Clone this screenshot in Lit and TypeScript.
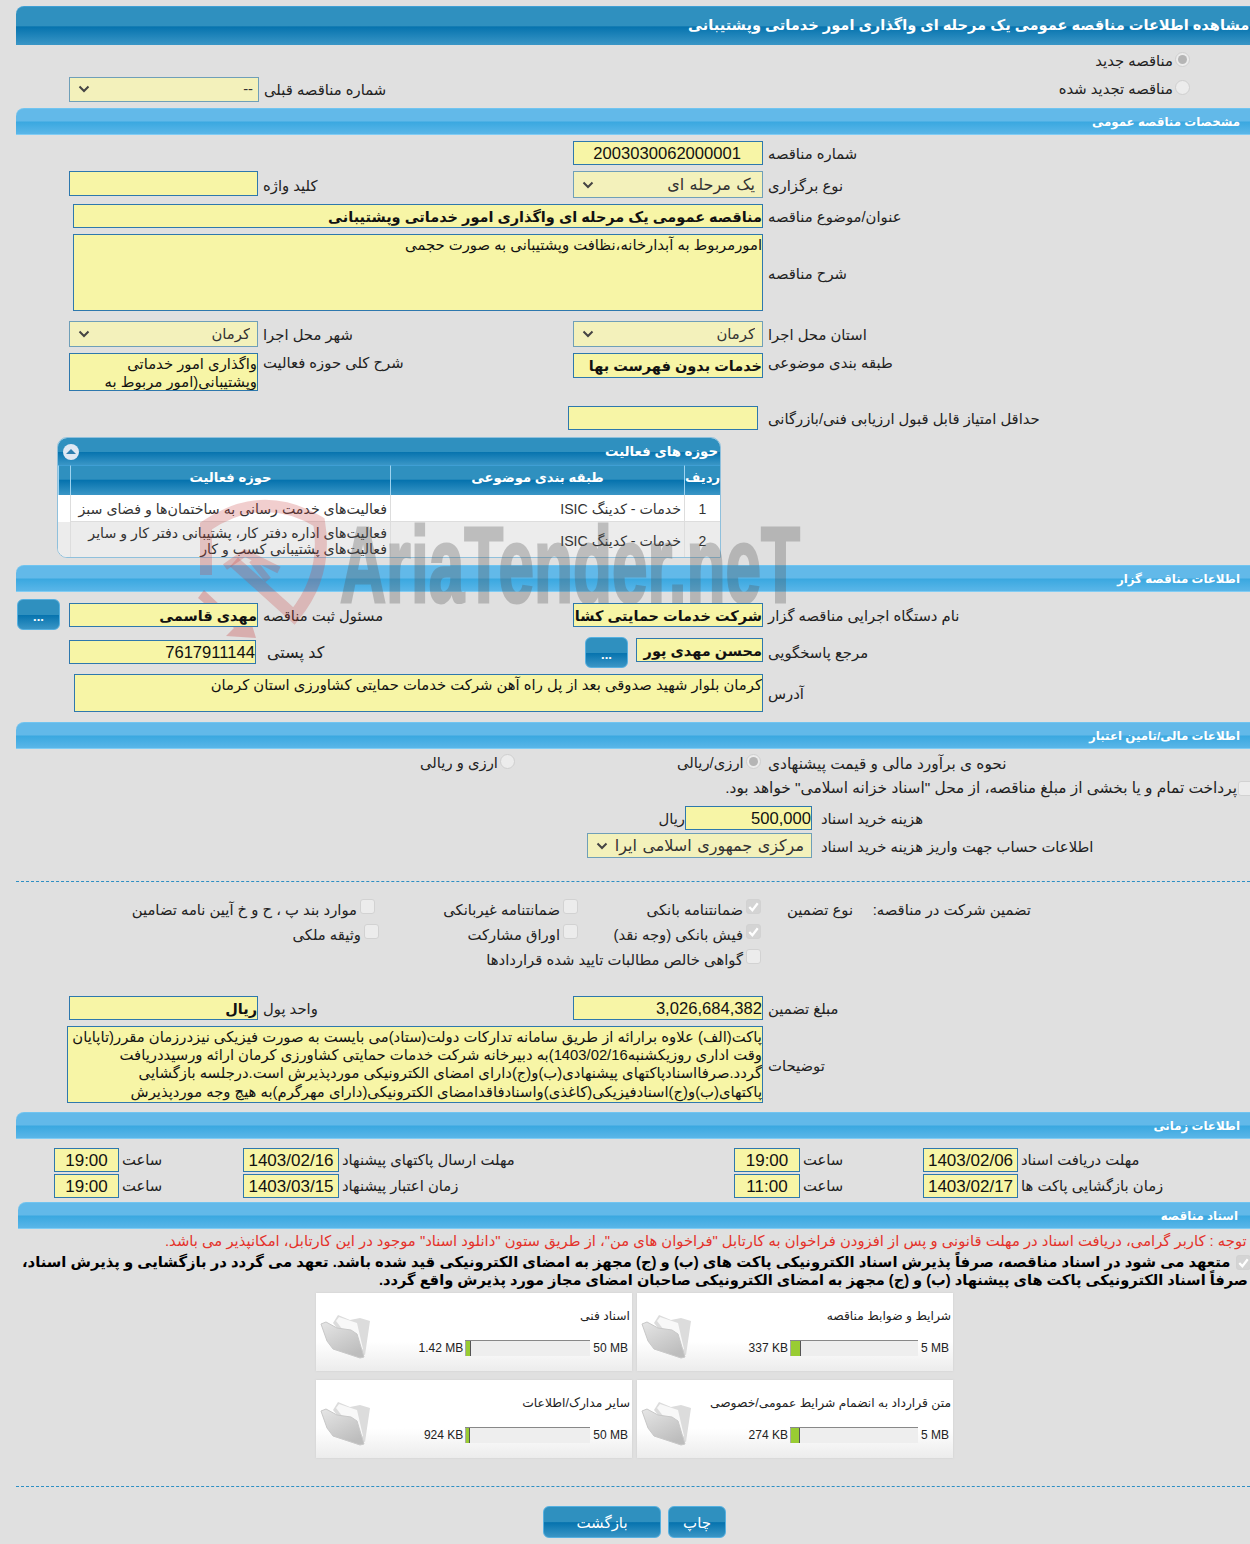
import { LitElement, html, css, svg } from "lit";
import { customElement } from "lit/decorators.js";

const chev = html`<svg class="chev" viewBox="0 0 12 8" width="12" height="8"><path d="M1.5 1.5 6 6l4.5-4.5" fill="none" stroke="#444" stroke-width="2"/></svg>`;
const check = html`<svg viewBox="0 0 16 16" width="15" height="15"><path d="M3.5 8.5 6.8 12 12.5 4.5" fill="none" stroke="#fff" stroke-width="2.4"/></svg>`;

const folder = svg`<svg class="folder" viewBox="0 0 54 48" width="54" height="48">
  <defs>
    <linearGradient id="fg" x1="0" y1="0" x2="0.6" y2="1"><stop offset="0" stop-color="#e6e6e6"/><stop offset="1" stop-color="#bdbdbd"/></linearGradient>
  </defs>
  <path d="M14 12 19 4 31 9 41 7 51 10 46 44 38 42Z" fill="#dcdcdc"/>
  <path d="M17 10 20 6 38 12 44 38 40 40Z" fill="#f8f8f8"/>
  <path d="M2 13 7 11 18 17 32 19 38 23 45 46 41 47 14 38 8 30Z" fill="url(#fg)" stroke="#c8c8c8" stroke-width="1"/>
</svg>`;

@customElement("file-card")
class FileCard extends LitElement {
  static properties = { name: {}, used: {}, max: {}, pct: { type: Number }, bar: { type: Number } };
  name = ""; used = ""; max = ""; pct = 0; bar = 128;
  static styles = css`
    :host { display: block; width: 316px; height: 78px; box-sizing: border-box; background: linear-gradient(#fff 0, #fff 62%, #ececec 100%); box-shadow: 0 0 2px #ccc; position: relative; font-family: "Liberation Sans", "DejaVu Sans", sans-serif; }
    .top { direction: rtl; padding: 13px 2px 0 0; height: 47px; box-sizing: border-box; font-size: 12.3px; line-height: 20px; color: #222; white-space: nowrap; }
    .bottom { display: flex; justify-content: flex-end; align-items: stretch; height: 16px; padding-right: 4px; font-size: 12px; line-height: 17px; color: #222; gap: 2px; white-space: nowrap; }
    .track { width: var(--w); background: #eee; border-top: 1px solid #888; display: flex; }
    .fill { background: #9c3; border-right: 1px solid #555; border-left: 1px solid #aaa; }
    .max { padding-left: 1px; }
    .folder { position: absolute; left: 3px; top: 18px; }
  `;
  render() {
    return html`${folder}
      <div class="top">${this.name}</div>
      <div class="bottom"><span>${this.used}</span>
        <span class="track" style="--w:${this.bar}px"><span class="fill" style="width:${this.pct}px"></span></span>
        <span class="max">${this.max}</span></div>`;
  }
}

@customElement("app-root")
class AppRoot extends LitElement {
  static styles = css`
    :host { display: block; width: 1250px; height: 1544px; overflow: hidden; background: #e0e0e0; position: relative; font-family: "Liberation Sans", "DejaVu Sans", sans-serif; font-size: 14.8px; color: #222; }
    * { box-sizing: border-box; }
    .page { padding-top: 6px; direction: ltr; }
    .titlebar { margin-left: 16px; height: 39px; border-radius: 8px 0 0 0; background: linear-gradient(#2f90bf 0, #2f90bf 50%, #0673ae 52%, #3a96c6 100%); border-top: 1px solid #3f9fd4; color: #fff; font-weight: bold; font-size: 14.6px; line-height: 37px; padding-left: 672px; white-space: nowrap; }
    .rtl { direction: rtl; display: inline-block; }
    .sec { margin-left: 16px; height: 27px; border-radius: 8px 0 0 0; background: linear-gradient(#62b9e9 0, #62b9e9 48%, #3aa8e0 52%, #5ab6e8 100%); border-top: 1px solid #70c4f0; border-bottom: 1px solid #80ccf4; color: #fff; font-weight: bold; font-size: 11.8px; line-height: 27px; text-align: right; padding-right: 10px; direction: rtl; }
    .sec.shift { margin-left: 18px; padding-right: 12px; }
    .r { display: grid; grid-template-columns: 69px 189px 315px 190px 1fr; position: relative; }
    .c2 { grid-column: 2; } .c3 { grid-column: 3; } .c4 { grid-column: 4; } .c5 { grid-column: 5; }
    .l { align-self: center; white-space: nowrap; padding: 2px 0 0 5px; direction: rtl; text-align: left; line-height: 16px; }
    .l.head { align-self: start; padding-top: 2px; }
    .l.wider { font-size: 15.4px; }
    .l.post { padding-left: 11px; font-size: 16px; }
    .f { position: relative; z-index: 2; background: #f7f5a6; border: 1px solid #2e78ad; direction: rtl; overflow: hidden; white-space: nowrap; font-size: 14.8px; line-height: 24px; color: #111; }
    .f.num { font-size: 16.6px; line-height: 24px; }
    .f.serial { padding-right: 21px; }
    .f.b { font-weight: bold; font-size: 14.5px; }
    .sel { position: relative; z-index: 2; background: #f3f1bb; border: 1px solid #6f9fb8; direction: rtl; overflow: hidden; white-space: nowrap; font-size: 14.8px; line-height: 23px; color: #333; padding-right: 7px; display: flex; align-items: center; justify-content: space-between; }
    .sel.big { font-size: 16px; word-spacing: 1px; }
    .sel > span { overflow: hidden; flex: 1 1 auto; min-width: 0; }
    .chev { flex: none; margin: 0 6px 0 8px; }
    .h24 { height: 24px; } .h25 { height: 25px; } .h26 { height: 26px; } .h27 { height: 27px; }
    .mt2 { margin-top: 2px; } .mt4 { margin-top: 4px; } .mt6 { margin-top: 6px; } .mt9 { margin-top: 9px; } .mt10 { margin-top: 10px; } .mt15 { margin-top: 15px; } .mt19 { margin-top: 19px; } .mt23 { margin-top: 23px; } .mt24 { margin-top: 24px; } .mt28 { margin-top: 28px; }
    .radios { height: 30px; display: flex; justify-content: flex-end; padding-right: 60px; align-items: center; gap: 2px; direction: ltr; }
    .radio { width: 15px; height: 15px; border-radius: 50%; border: 1px solid #cfcfcf; background: #ececec; flex: none; display: flex; align-items: center; justify-content: center; position: relative; top: -1px; }
    .radio.on::after { content: ""; width: 9px; height: 9px; border-radius: 50%; background: #b5b5b5; }
    .rad-row { height: 27px; margin-bottom: 6px; display: grid; grid-template-columns: 69px 190px 1fr auto; align-items: center; }
    .rad-item { display: flex; align-items: center; gap: 2px; padding-right: 60px; direction: ltr; }
    .rad-item > span:first-child, .radios > span:first-child { direction: rtl; }
    .prev { height: 25px; margin-top: 1px; padding-right: 5px; }
    .wide { height: 24px; margin-left: 73px; width: 690px; }
    .desc { height: 77px; margin-left: 73px; width: 690px; line-height: 20px; white-space: normal; }
    .row-w { display: grid; grid-template-columns: 763px 1fr; }
    .topic { height: 38px; line-height: 18px; padding-top: 1px; }
    .min { display: grid; grid-template-columns: 568px 190px 1fr; height: 24px; margin-top: 15px; }
    .min .l { padding-left: 10px; }

    .panel { margin: 7px 0 7px 57px; width: 664px; height: 121px; background: #fff; border: 1px solid #8fc0dc; border-radius: 10px 10px 0 10px; overflow: hidden; position: relative; }
    .phead { height: 27px; background: linear-gradient(#2f90bf 0, #2f90bf 50%, #0673ae 52%, #3a96c6 100%); color: #fff; font-weight: bold; font-size: 13.3px; line-height: 27px; direction: rtl; padding-right: 2px; display: flex; justify-content: space-between; align-items: center; }
    .toggle { width: 16px; height: 16px; border-radius: 50%; background: #dfe8f3; margin-left: 5px; display: flex; align-items: center; justify-content: center; }
    .toggle::after { content: ""; width: 0; height: 0; border-left: 5px solid transparent; border-right: 5px solid transparent; border-bottom: 5px solid #2f7fb0; }
    .tbl { display: grid; grid-template-columns: 36px 294px 320px 12px; direction: rtl; }
    .th { height: 30px; background: linear-gradient(#2f90bf 0, #2f90bf 45%, #0673ae 50%, #3a96c6 100%); color: #fff; font-weight: bold; font-size: 13.2px; line-height: 24px; text-align: center; border-left: 1px solid #9ed3f0; border-top: 1px solid #3f9fd4; white-space: nowrap; }
    .th:last-child { border-left: 0; }
    .td { display: flex; align-items: center; padding: 2px 3px 0; font-size: 14.2px; line-height: 16px; color: #333; border-left: 1px solid #ddd; border-bottom: 1px solid #ddd; white-space: nowrap; }
    .td.center { justify-content: center; font-size: 14px; }
    .rw1 { height: 27px; background: #fff; }
    .rw2 { height: 36px; background: #ececec; }

    .org { height: 31px; margin-top: 7px; align-items: center; grid-template-columns: 17px 43px 9px 189px 315px 190px 1fr; display: grid; }
    .btn { position: relative; z-index: 2; height: 31px; width: 43px; border-radius: 6px; background: linear-gradient(#2f90bf 0, #2f90bf 50%, #0673ae 52%, #3a96c6 100%); border: 1px solid #56b0e0; color: #fff; font-size: 13px; font-weight: bold; line-height: 33px; text-align: center; }
    .org .f { height: 24px; }
    .ref { display: grid; grid-template-columns: 69px 187px 329px 43px 8px 127px 1fr; height: 32px; margin-top: 6px; align-items: center; }
    .up { align-self: start; margin-top: 2px; }
    .addr { height: 38px; margin-left: 74px; width: 689px; line-height: 20px; }

    .fin1 { display: grid; grid-template-columns: 420px 257px 86px 1fr; height: 27px; align-items: center; direction: ltr; }
    .inl { display: flex; align-items: center; white-space: nowrap; gap: 2px; direction: ltr; }
    .inl > span:first-child { direction: rtl; }
    .cb { width: 15px; height: 15px; border-radius: 3px; background: #ececec; border: 1px solid #d2d2d2; flex: none; display: block; position: relative; top: -3px; }
    .cb.on { background: #d4d4d4; }
    .cb svg { display: block; margin: -1px; }
    .pay { height: 26px; position: relative; direction: rtl; padding-right: 13px; white-space: nowrap; line-height: 24px; font-size: 15.4px; }
    .pay .cb { position: absolute; right: -3px; top: 5px; }
    .fee { display: grid; grid-template-columns: 661px 24px 127px 1fr; height: 24px; margin-top: 4px; align-items: center; }
    .fee .l, .acct .l { padding-left: 9px; }
    .fee .rial { padding-left: 0; }
    .acct { display: grid; grid-template-columns: 587px 225px 1fr; height: 25px; margin-top: 3px; align-items: center; }
    .dash { border-top: 1px dashed #2e8fc4; margin-left: 16px; }

    .g { direction: rtl; display: grid; grid-template-columns: 178px 92px 183px 203px 1fr; padding-right: 219px; height: 25px; align-items: center; white-space: nowrap; }
    .g.first { margin-top: 15px; }
    .g .it { display: flex; align-items: center; gap: 3px; }
    .nudge { margin-right: -4px; }
    .notes { margin-left: 67px; width: 696px; height: 77px; line-height: 18.2px; padding-top: 1px; white-space: nowrap; }
    .note-row { display: grid; grid-template-columns: 763px 1fr; margin-top: 6px; align-items: center; }

    .t { display: grid; grid-template-columns: 54px 65px 124px 96px 395px 66px 123px 95px 1fr; height: 24px; }
    .t .f { font-size: 17px; text-align: center; direction: ltr; line-height: 23px; }
    .t .l { padding: 0 0 0 3px; }
    .red { color: #e4322a; white-space: nowrap; padding-left: 165px; height: 22px; margin-top: 1px; line-height: 22px; }
    .commit { position: relative; font-weight: bold; color: #000; line-height: 18px; white-space: nowrap; height: 41px; padding-top: 1px; }
    .commit .ln1 { padding-left: 22px; }
    .commit .ln2 { padding-left: 379px; font-size: 14.6px; }
    .commit .cb { position: absolute; left: 1236px; top: 3px; }
    .cards { display: grid; grid-template-columns: 316px 316px; gap: 9px 5px; margin-left: 316px; }
    .btns { display: flex; gap: 7px; padding-left: 543px; }
    .bb { position: relative; z-index: 2; height: 32px; border-radius: 6px; background: linear-gradient(#2f90bf 0, #2f90bf 50%, #0673ae 52%, #3a96c6 100%); border: 1px solid #56b0e0; color: #fff; font-size: 15px; line-height: 32px; text-align: center; }
    .bb.back { width: 118px; }
    .bb.print { width: 58px; }
    .wm { position: absolute; left: 190px; top: 490px; z-index: 1; pointer-events: none; }
    .wmg { opacity: .3; }
    .wmt { font-family: "Liberation Sans", sans-serif; font-weight: bold; font-size: 108px; fill: #555; stroke: #555; stroke-width: 3px; }
  `;

  private label(t: string, cls = "") {
    return html`<div class="l ${cls}">${t}</div>`;
  }

  render() {
    return html`<div class="page">
      <div class="titlebar"><span class="rtl">مشاهده اطلاعات مناقصه عمومی یک مرحله ای واگذاری امور خدماتی وپشتیبانی</span></div>

      <div class="radios"><span>مناقصه جدید</span><span class="radio on"></span></div>
      <div class="rad-row">
        <div class="sel c2 prev"><span>--</span>${chev}</div>
        ${this.label("شماره مناقصه قبلی")}
        <div class="rad-item"><span>مناقصه تجدید شده</span><span class="radio"></span></div>
      </div>

      <div class="sec">مشخصات مناقصه عمومی</div>

      <div class="r mt6">
        <div class="f num serial c4 h24">2003030062000001</div>${this.label("شماره مناقصه", "c5")}
      </div>
      <div class="r mt6 h27">
        <div class="f c2 h25"></div>${this.label("کلید واژه", "c3")}
        <div class="sel big c4"><span>یک مرحله ای</span>${chev}</div>${this.label("نوع برگزاری", "c5")}
      </div>
      <div class="row-w mt6">
        <div class="f b wide">مناقصه عمومی یک مرحله ای واگذاری امور خدماتی وپشتیبانی</div>${this.label("عنوان/موضوع مناقصه")}
      </div>
      <div class="row-w mt6">
        <div class="f desc">امورمربوط به آبدارخانه،نظافت وپشتیبانی به صورت حجمی</div>${this.label("شرح مناقصه")}
      </div>
      <div class="r mt10 h26">
        <div class="sel c2"><span>کرمان</span>${chev}</div>${this.label("شهر محل اجرا", "c3")}
        <div class="sel c4"><span>کرمان</span>${chev}</div>${this.label("استان محل اجرا", "c5")}
      </div>
      <div class="r mt6">
        <div class="f c2 topic">واگذاری امور خدماتی<br />وپشتیبانی(امور مربوط به</div>
        ${this.label("شرح کلی حوزه فعالیت", "c3 head")}
        <div class="f b c4 h25">خدمات بدون فهرست بها</div>${this.label("طبقه بندی موضوعی", "c5 head")}
      </div>
      <div class="min"><div class="f c2"></div>${this.label("حداقل امتیاز قابل قبول ارزیابی فنی/بازرگانی")}</div>

      <div class="panel">
        <div class="phead"><span>حوزه های فعالیت</span><span class="toggle"></span></div>
        <div class="tbl">
          <div class="th">ردیف</div><div class="th">طبقه بندی موضوعی</div><div class="th">حوزه فعالیت</div><div class="th"></div>
          <div class="td center rw1">1</div><div class="td rw1">خدمات - کدینگ ISIC</div><div class="td rw1">فعالیت‌های خدمت رسانی به ساختمان‌ها و فضای سبز</div><div class="rw1"></div>
          <div class="td center rw2">2</div><div class="td rw2">خدمات - کدینگ ISIC</div><div class="td rw2"><div>فعالیت‌های اداره دفتر کار، پشتیبانی دفتر کار و سایر<br />فعالیت‌های پشتیبانی کسب و کار</div></div><div class="rw2"></div>
        </div>
      </div>

      <div class="sec">اطلاعات مناقصه گزار</div>
      <div class="org">
        <div></div><div class="btn">...</div><div></div>
        <div class="f b">مهدی قاسمی</div>${this.label("مسئول ثبت مناقصه")}
        <div class="f b">شرکت خدمات حمایتی کشاورزی</div>${this.label("نام دستگاه اجرایی مناقصه گزار")}
      </div>
      <div class="ref">
        <div></div><div class="f num h24">7617911144</div>${this.label("کد پستی", "post")}
        <div class="btn">...</div><div></div>
        <div class="f b h24 up">محسن مهدی پور</div>${this.label("مرجع پاسخگویی")}
      </div>
      <div class="row-w mt6">
        <div class="f addr">کرمان بلوار شهید صدوقی بعد از پل راه آهن شرکت خدمات حمایتی کشاورزی استان کرمان</div>${this.label("آدرس")}
      </div>

      <div class="sec mt10">اطلاعات مالی/تامین اعتبار</div>
      <div class="fin1">
        <div></div>
        <div class="inl"><span>ارزی و ریالی</span><span class="radio"></span></div>
        <div class="inl"><span>ارزی/ریالی</span><span class="radio on"></span></div>
        ${this.label("نحوه ی برآورد مالی و قیمت پیشنهادی", "wider")}
      </div>
      <div class="pay">پرداخت تمام و یا بخشی از مبلغ مناقصه، از محل "اسناد خزانه اسلامی" خواهد بود.<span class="cb"></span></div>
      <div class="fee"><div></div>${this.label("ریال", "rial")}<div class="f num h24">500,000</div>${this.label("هزینه خرید اسناد")}</div>
      <div class="acct"><div></div><div class="sel big h25"><span>مرکزی جمهوری اسلامی ایران</span>${chev}</div>${this.label("اطلاعات حساب جهت واریز هزینه خرید اسناد")}</div>
      <div class="dash mt23"></div>

      <div class="g first">
        <div>تضمین شرکت در مناقصه:</div><div>نوع تضمین</div>
        <div class="it"><span class="cb on">${check}</span>ضمانتنامه بانکی</div>
        <div class="it"><span class="cb"></span>ضمانتنامه غیربانکی</div>
        <div class="it"><span class="cb"></span>موارد بند پ ، ح و خ آیین نامه تضامین</div>
      </div>
      <div class="g">
        <div></div><div></div>
        <div class="it"><span class="cb on">${check}</span>فیش بانکی (وجه نقد)</div>
        <div class="it"><span class="cb"></span>اوراق مشارکت</div>
        <div class="it nudge"><span class="cb"></span>وثیقه ملکی</div>
      </div>
      <div class="g">
        <div></div><div></div>
        <div class="it"><span class="cb"></span>گواهی خالص مطالبات تایید شده قراردادها</div>
      </div>

      <div class="r h24 mt24">
        <div class="f b c2">ریال</div>${this.label("واحد پول", "c3")}
        <div class="f num c4">3,026,684,382</div>${this.label("مبلغ تضمین", "c5")}
      </div>
      <div class="note-row">
        <div class="f notes">پاکت(الف) علاوه برارائه از طریق سامانه تدارکات دولت(ستاد)می بایست به صورت فیزیکی نیزدرزمان مقرر(تاپایان<br />وقت اداری روزیکشنبه1403/02/16)به دبیرخانه شرکت خدمات حمایتی کشاورزی کرمان ارائه ورسیددریافت<br />گردد.صرفااسنادپاکتهای پیشنهادی(ب)و(ج)دارای امضای الکترونیکی موردپذیرش است.درجلسه بازگشایی<br />پاکتهای(ب)و(ج)اسنادفیزیکی(کاغذی)واسنادفاقدامضای الکترونیکی(دارای مهرگرم)به هیچ وجه موردپذیرش</div>
        ${this.label("توضیحات")}
      </div>

      <div class="sec mt9">اطلاعات زمانی</div>
      <div class="t mt9">
        <div></div><div class="f">19:00</div>${this.label("ساعت")}
        <div class="f">1403/02/16</div>${this.label("مهلت ارسال پاکتهای پیشنهاد")}
        <div class="f">19:00</div>${this.label("ساعت")}
        <div class="f">1403/02/06</div>${this.label("مهلت دریافت اسناد")}
      </div>
      <div class="t mt2">
        <div></div><div class="f">19:00</div>${this.label("ساعت")}
        <div class="f">1403/03/15</div>${this.label("زمان اعتبار پیشنهاد")}
        <div class="f">11:00</div>${this.label("ساعت")}
        <div class="f">1403/02/17</div>${this.label("زمان بازگشایی پاکت ها")}
      </div>

      <div class="sec shift mt4">اسناد مناقصه</div>
      <div class="red"><span class="rtl">توجه : کاربر گرامی، دریافت اسناد در مهلت قانونی و پس از افزودن فراخوان به کارتابل "فراخوان های من"، از طریق ستون "دانلود اسناد" موجود در این کارتابل، امکانپذیر می باشد.</span></div>
      <div class="commit">
        <div class="ln1"><span class="rtl">متعهد می شود در اسناد مناقصه، صرفاً پذیرش اسناد الکترونیکی پاکت های (ب) و (ج) مجهز به امضای الکترونیکی قید شده باشد. تعهد می گردد در بازگشایی و پذیرش اسناد،</span></div>
        <div class="ln2"><span class="rtl">صرفاً اسناد الکترونیکی پاکت های پیشنهاد (ب) و (ج) مجهز به امضای الکترونیکی صاحبان امضای مجاز مورد پذیرش واقع گردد.</span></div>
        <span class="cb on">${check}</span>
      </div>
      <div class="cards">
        <file-card name="اسناد فنی" used="1.42 MB" max="50 MB" .pct=${4} .bar=${125}></file-card>
        <file-card name="شرایط و ضوابط مناقصه" used="337 KB" max="5 MB" .pct=${9} .bar=${128}></file-card>
        <file-card name="سایر مدارک/اطلاعات" used="924 KB" max="50 MB" .pct=${3} .bar=${125}></file-card>
        <file-card name="متن قرارداد به انضمام شرایط عمومی/خصوصی" used="274 KB" max="5 MB" .pct=${8} .bar=${128}></file-card>
      </div>
      <div class="dash mt28"></div>
      <div class="btns mt19"><div class="bb back">بازگشت</div><div class="bb print">چاپ</div></div>
    </div>
    <svg class="wm" width="620" height="160" viewBox="190 490 620 160">
      <path d="M206 575V526Q262 488 319 522 Q328 575 294 616 L234 562" fill="none" stroke="#c83c3c" stroke-opacity=".25" stroke-width="12"/>
      <path d="M225 567 245 553 279 570 M252 560 268 580" fill="none" stroke="#c83c3c" stroke-opacity=".25" stroke-width="7"/>
      <path d="M204 590 238 622 248 612 256 638 226 636 234 628 198 598Z" fill="#c83c3c" fill-opacity=".3"/>
      <g class="wmg"><text class="wmt" x="340" y="602" textLength="460" lengthAdjust="spacingAndGlyphs">AriaTender.neT</text></g>
    </svg>`;
  }
}
